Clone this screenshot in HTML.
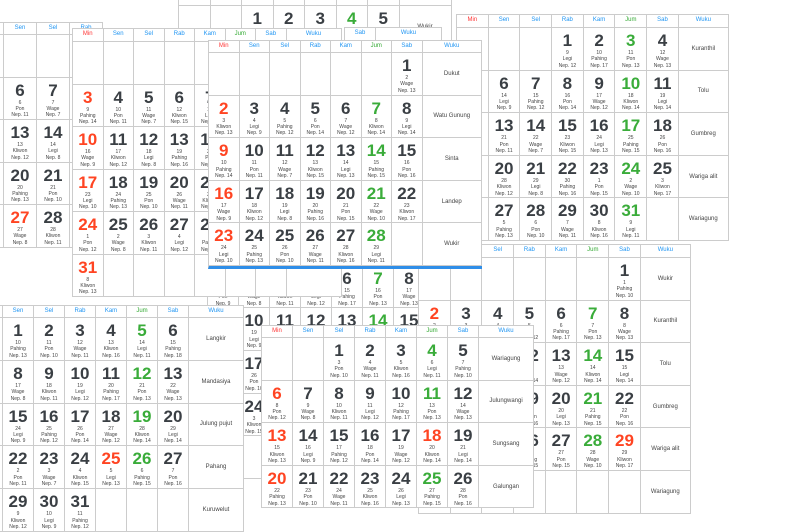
<!DOCTYPE html>
<html><head><meta charset="utf-8"><style>
*{box-sizing:border-box;margin:0;padding:0}
body{width:800px;height:500px;overflow:hidden;background:#fff;position:relative;font-family:"Liberation Sans",sans-serif}
.t{position:absolute;background:#fff;border-top:1px solid #ccc;border-left:1px solid #ccc;display:grid}
.t>p{border-right:1px solid #ccc;border-bottom:1px solid #ccc;text-align:center;overflow:hidden;color:#333}
.t>p.h{font-size:6px;line-height:11px;color:#2196f3}
.t>p.h.r{color:#f33}.t>p.h.g{color:#3a3}
.t>p b{display:block;font-weight:bold;font-size:17px;line-height:18px;margin-top:4px;color:#3a3f44}
.t>p.r b{color:#f42}.t>p.g b{color:#3aac3a}
.t>p i{display:block;font-style:normal;font-size:5px;line-height:6.4px;color:#444}
.t>p.w{display:flex;align-items:center;justify-content:center;font-size:6px;color:#444}
</style></head><body>

<!-- C top -->
<div class="t" style="left:178px;top:-8px;grid-template-columns:repeat(7,31.5px) 52px;grid-template-rows:13px 42px 42px">
<p class="h r">Min</p><p class="h">Sen</p><p class="h">Sel</p><p class="h">Rab</p><p class="h">Kam</p><p class="h g">Jum</p><p class="h">Sab</p><p class="h">Wuku</p>
<p></p><p></p><p><b>1</b><i>2</i><i>Pon</i><i>Nep. 10</i></p><p><b>2</b><i>3</i><i>Wage</i><i>Nep. 11</i></p><p><b>3</b><i>4</i><i>Kliwon</i><i>Nep. 16</i></p><p class="g"><b>4</b><i>5</i><i>Legi</i><i>Nep. 11</i></p><p><b>5</b><i>6</i><i>Pahing</i><i>Nep. 10</i></p><p class="w">Wukir</p>
<p></p><p></p><p></p><p></p><p></p><p></p><p></p><p></p>
</div>

<!-- A left top -->
<div class="t" style="left:-30px;top:22px;grid-template-columns:repeat(4,33px);grid-template-rows:12px repeat(5,42.5px)">
<p class="h r">Min</p><p class="h">Sen</p><p class="h">Sel</p><p class="h">Rab</p>
<p></p><p></p><p></p><p></p>
<p></p><p><b>6</b><i>6</i><i>Pon</i><i>Nep. 11</i></p><p><b>7</b><i>7</i><i>Wage</i><i>Nep. 7</i></p><p></p>
<p></p><p><b>13</b><i>13</i><i>Kliwon</i><i>Nep. 12</i></p><p><b>14</b><i>14</i><i>Legi</i><i>Nep. 8</i></p><p></p>
<p></p><p><b>20</b><i>20</i><i>Pahing</i><i>Nep. 13</i></p><p><b>21</b><i>21</i><i>Pon</i><i>Nep. 10</i></p><p></p>
<p></p><p class="r"><b>27</b><i>27</i><i>Wage</i><i>Nep. 8</i></p><p><b>28</b><i>28</i><i>Kliwon</i><i>Nep. 11</i></p><p></p>
</div>

<!-- J header strip -->
<div class="t" style="left:344px;top:27px;grid-template-columns:31px 66px;grid-template-rows:13px 30px">
<p class="h">Sab</p><p class="h">Wuku</p><p></p><p></p>
</div>

<!-- I behind -->
<div class="t" style="left:207px;top:222px;grid-template-columns:repeat(7,31px) 55px;grid-template-rows:repeat(6,42.7px)">
<p></p><p></p><p></p><p></p><p></p><p></p><p></p><p></p>
<p class="r"><b>2</b><i>11</i><i>Pon</i><i>Nep. 9</i></p><p><b>3</b><i>12</i><i>Wage</i><i>Nep. 8</i></p><p><b>4</b><i>13</i><i>Kliwon</i><i>Nep. 11</i></p><p><b>5</b><i>14</i><i>Legi</i><i>Nep. 12</i></p><p><b>6</b><i>15</i><i>Pahing</i><i>Nep. 17</i></p><p class="g"><b>7</b><i>16</i><i>Pon</i><i>Nep. 13</i></p><p><b>8</b><i>17</i><i>Wage</i><i>Nep. 13</i></p><p class="w">Kuranthil</p>
<p class="r"><b>9</b><i>18</i><i>Kliwon</i><i>Nep. 9</i></p><p><b>10</b><i>19</i><i>Legi</i><i>Nep. 9</i></p><p><b>11</b><i>20</i><i>Pahing</i><i>Nep. 12</i></p><p><b>12</b><i>21</i><i>Pon</i><i>Nep. 14</i></p><p><b>13</b><i>22</i><i>Wage</i><i>Nep. 12</i></p><p class="g"><b>14</b><i>23</i><i>Kliwon</i><i>Nep. 14</i></p><p><b>15</b><i>24</i><i>Legi</i><i>Nep. 14</i></p><p class="w">Tolu</p>
<p class="r"><b>16</b><i>25</i><i>Pahing</i><i>Nep. 13</i></p><p><b>17</b><i>26</i><i>Pon</i><i>Nep. 10</i></p><p><b>18</b><i>27</i><i>Wage</i><i>Nep. 11</i></p><p><b>19</b><i>28</i><i>Kliwon</i><i>Nep. 16</i></p><p><b>20</b><i>29</i><i>Legi</i><i>Nep. 13</i></p><p class="g"><b>21</b><i>1</i><i>Pahing</i><i>Nep. 15</i></p><p><b>22</b><i>2</i><i>Pon</i><i>Nep. 16</i></p><p class="w">Gumbreg</p>
<p class="r"><b>23</b><i>2</i><i>Wage</i><i>Nep. 11</i></p><p><b>24</b><i>3</i><i>Kliwon</i><i>Nep. 15</i></p><p><b>25</b><i>4</i><i>Legi</i><i>Nep. 12</i></p><p><b>26</b><i>5</i><i>Pahing</i><i>Nep. 15</i></p><p><b>27</b><i>6</i><i>Pon</i><i>Nep. 15</i></p><p class="g"><b>28</b><i>7</i><i>Wage</i><i>Nep. 10</i></p><p><b>29</b><i>8</i><i>Kliwon</i><i>Nep. 17</i></p><p class="w">Wariga alit</p>
<p></p><p></p><p></p><p></p><p></p><p></p><p></p><p></p>
</div>

<!-- B -->
<div class="t" style="left:72px;top:28px;grid-template-columns:repeat(7,30.5px) 55px;grid-template-rows:13px repeat(6,42.5px)">
<p class="h r">Min</p><p class="h">Sen</p><p class="h">Sel</p><p class="h">Rab</p><p class="h">Kam</p><p class="h g">Jum</p><p class="h">Sab</p><p class="h">Wuku</p>
<p></p><p></p><p></p><p></p><p></p><p></p><p></p><p></p>
<p class="r"><b>3</b><i>9</i><i>Pahing</i><i>Nep. 14</i></p><p><b>4</b><i>10</i><i>Pon</i><i>Nep. 11</i></p><p><b>5</b><i>11</i><i>Wage</i><i>Nep. 7</i></p><p><b>6</b><i>12</i><i>Kliwon</i><i>Nep. 15</i></p><p><b>7</b><i>13</i><i>Legi</i><i>Nep. 13</i></p><p></p><p></p><p class="w">Sinta</p>
<p class="r"><b>10</b><i>16</i><i>Wage</i><i>Nep. 9</i></p><p><b>11</b><i>17</i><i>Kliwon</i><i>Nep. 12</i></p><p><b>12</b><i>18</i><i>Legi</i><i>Nep. 8</i></p><p><b>13</b><i>19</i><i>Pahing</i><i>Nep. 16</i></p><p><b>14</b><i>20</i><i>Pon</i><i>Nep. 15</i></p><p></p><p></p><p class="w">Landep</p>
<p class="r"><b>17</b><i>23</i><i>Legi</i><i>Nep. 10</i></p><p><b>18</b><i>24</i><i>Pahing</i><i>Nep. 13</i></p><p><b>19</b><i>25</i><i>Pon</i><i>Nep. 10</i></p><p><b>20</b><i>26</i><i>Wage</i><i>Nep. 11</i></p><p><b>21</b><i>27</i><i>Kliwon</i><i>Nep. 16</i></p><p></p><p></p><p class="w">Wukir</p>
<p class="r"><b>24</b><i>1</i><i>Pon</i><i>Nep. 12</i></p><p><b>25</b><i>2</i><i>Wage</i><i>Nep. 8</i></p><p><b>26</b><i>3</i><i>Kliwon</i><i>Nep. 11</i></p><p><b>27</b><i>4</i><i>Legi</i><i>Nep. 12</i></p><p><b>28</b><i>5</i><i>Pahing</i><i>Nep. 15</i></p><p></p><p></p><p class="w">Kulantir</p>
<p class="r"><b>31</b><i>8</i><i>Kliwon</i><i>Nep. 13</i></p><p></p><p></p><p></p><p></p><p></p><p></p><p class="w" style="align-items:flex-start;padding-top:5px">Watu Gunung</p>
</div>

<!-- D right top -->
<div class="t" style="left:456px;top:14px;grid-template-columns:repeat(7,31.7px) 50px;grid-template-rows:13px repeat(5,42.6px)">
<p class="h r">Min</p><p class="h">Sen</p><p class="h">Sel</p><p class="h">Rab</p><p class="h">Kam</p><p class="h g">Jum</p><p class="h">Sab</p><p class="h">Wuku</p>
<p></p><p></p><p></p><p><b>1</b><i>9</i><i>Legi</i><i>Nep. 12</i></p><p><b>2</b><i>10</i><i>Pahing</i><i>Nep. 17</i></p><p class="g"><b>3</b><i>11</i><i>Pon</i><i>Nep. 13</i></p><p><b>4</b><i>12</i><i>Wage</i><i>Nep. 13</i></p><p class="w">Kuranthil</p>
<p></p><p><b>6</b><i>14</i><i>Legi</i><i>Nep. 9</i></p><p><b>7</b><i>15</i><i>Pahing</i><i>Nep. 12</i></p><p><b>8</b><i>16</i><i>Pon</i><i>Nep. 14</i></p><p><b>9</b><i>17</i><i>Wage</i><i>Nep. 12</i></p><p class="g"><b>10</b><i>18</i><i>Kliwon</i><i>Nep. 14</i></p><p><b>11</b><i>19</i><i>Legi</i><i>Nep. 14</i></p><p class="w">Tolu</p>
<p></p><p><b>13</b><i>21</i><i>Pon</i><i>Nep. 11</i></p><p><b>14</b><i>22</i><i>Wage</i><i>Nep. 7</i></p><p><b>15</b><i>23</i><i>Kliwon</i><i>Nep. 15</i></p><p><b>16</b><i>24</i><i>Legi</i><i>Nep. 13</i></p><p class="g"><b>17</b><i>25</i><i>Pahing</i><i>Nep. 15</i></p><p><b>18</b><i>26</i><i>Pon</i><i>Nep. 16</i></p><p class="w">Gumbreg</p>
<p></p><p><b>20</b><i>28</i><i>Kliwon</i><i>Nep. 12</i></p><p><b>21</b><i>29</i><i>Legi</i><i>Nep. 8</i></p><p><b>22</b><i>30</i><i>Pahing</i><i>Nep. 16</i></p><p><b>23</b><i>1</i><i>Pon</i><i>Nep. 15</i></p><p class="g"><b>24</b><i>2</i><i>Wage</i><i>Nep. 10</i></p><p><b>25</b><i>3</i><i>Kliwon</i><i>Nep. 17</i></p><p class="w">Wariga alit</p>
<p></p><p><b>27</b><i>5</i><i>Pahing</i><i>Nep. 13</i></p><p><b>28</b><i>6</i><i>Pon</i><i>Nep. 10</i></p><p><b>29</b><i>7</i><i>Wage</i><i>Nep. 11</i></p><p><b>30</b><i>8</i><i>Kliwon</i><i>Nep. 16</i></p><p class="g"><b>31</b><i>9</i><i>Legi</i><i>Nep. 11</i></p><p></p><p class="w">Wariagung</p>
</div>

<!-- F right lower -->
<div class="t" style="left:418px;top:244px;grid-template-columns:repeat(7,31.7px) 50px;grid-template-rows:13px repeat(6,42.6px)">
<p class="h r">Min</p><p class="h">Sen</p><p class="h">Sel</p><p class="h">Rab</p><p class="h">Kam</p><p class="h g">Jum</p><p class="h">Sab</p><p class="h">Wuku</p>
<p></p><p></p><p></p><p></p><p></p><p></p><p><b>1</b><i>1</i><i>Pahing</i><i>Nep. 10</i></p><p class="w">Wukir</p>
<p class="r"><b>2</b><i>2</i><i>Pon</i><i>Nep. 12</i></p><p><b>3</b><i>3</i><i>Wage</i><i>Nep. 8</i></p><p><b>4</b><i>4</i><i>Kliwon</i><i>Nep. 11</i></p><p><b>5</b><i>5</i><i>Legi</i><i>Nep. 12</i></p><p><b>6</b><i>6</i><i>Pahing</i><i>Nep. 17</i></p><p class="g"><b>7</b><i>7</i><i>Pon</i><i>Nep. 13</i></p><p><b>8</b><i>8</i><i>Wage</i><i>Nep. 13</i></p><p class="w">Kuranthil</p>
<p class="r"><b>9</b><i>9</i><i>Kliwon</i><i>Nep. 13</i></p><p><b>10</b><i>10</i><i>Legi</i><i>Nep. 9</i></p><p><b>11</b><i>11</i><i>Pahing</i><i>Nep. 12</i></p><p><b>12</b><i>12</i><i>Pon</i><i>Nep. 14</i></p><p><b>13</b><i>13</i><i>Wage</i><i>Nep. 12</i></p><p class="g"><b>14</b><i>14</i><i>Kliwon</i><i>Nep. 14</i></p><p><b>15</b><i>15</i><i>Legi</i><i>Nep. 14</i></p><p class="w">Tolu</p>
<p class="r"><b>16</b><i>16</i><i>Pahing</i><i>Nep. 13</i></p><p><b>17</b><i>17</i><i>Pon</i><i>Nep. 10</i></p><p><b>18</b><i>18</i><i>Wage</i><i>Nep. 11</i></p><p><b>19</b><i>19</i><i>Kliwon</i><i>Nep. 16</i></p><p><b>20</b><i>20</i><i>Legi</i><i>Nep. 13</i></p><p class="g"><b>21</b><i>21</i><i>Pahing</i><i>Nep. 15</i></p><p><b>22</b><i>22</i><i>Pon</i><i>Nep. 16</i></p><p class="w">Gumbreg</p>
<p class="r"><b>23</b><i>23</i><i>Wage</i><i>Nep. 11</i></p><p><b>24</b><i>24</i><i>Kliwon</i><i>Nep. 15</i></p><p><b>25</b><i>25</i><i>Legi</i><i>Nep. 12</i></p><p><b>26</b><i>26</i><i>Pahing</i><i>Nep. 15</i></p><p><b>27</b><i>27</i><i>Pon</i><i>Nep. 15</i></p><p class="g"><b>28</b><i>28</i><i>Wage</i><i>Nep. 10</i></p><p class="r"><b>29</b><i>29</i><i>Kliwon</i><i>Nep. 17</i></p><p class="w">Wariga alit</p>
<p></p><p></p><p></p><p></p><p></p><p></p><p></p><p class="w">Wariagung</p>
</div>

<!-- E main -->
<div class="t" style="left:208px;top:40px;grid-template-columns:repeat(7,30.5px) 59.5px;grid-template-rows:12px repeat(5,42.6px);border-bottom:3px solid #2f8ee8">
<p class="h r">Min</p><p class="h">Sen</p><p class="h">Sel</p><p class="h">Rab</p><p class="h">Kam</p><p class="h g">Jum</p><p class="h">Sab</p><p class="h">Wuku</p>
<p></p><p></p><p></p><p></p><p></p><p></p><p><b>1</b><i>2</i><i>Wage</i><i>Nep. 13</i></p><p class="w">Dukut</p>
<p class="r"><b>2</b><i>3</i><i>Kliwon</i><i>Nep. 13</i></p><p><b>3</b><i>4</i><i>Legi</i><i>Nep. 9</i></p><p><b>4</b><i>5</i><i>Pahing</i><i>Nep. 12</i></p><p><b>5</b><i>6</i><i>Pon</i><i>Nep. 14</i></p><p><b>6</b><i>7</i><i>Wage</i><i>Nep. 12</i></p><p class="g"><b>7</b><i>8</i><i>Kliwon</i><i>Nep. 14</i></p><p><b>8</b><i>9</i><i>Legi</i><i>Nep. 14</i></p><p class="w">Watu Gunung</p>
<p class="r"><b>9</b><i>10</i><i>Pahing</i><i>Nep. 14</i></p><p><b>10</b><i>11</i><i>Pon</i><i>Nep. 11</i></p><p><b>11</b><i>12</i><i>Wage</i><i>Nep. 7</i></p><p><b>12</b><i>13</i><i>Kliwon</i><i>Nep. 15</i></p><p><b>13</b><i>14</i><i>Legi</i><i>Nep. 13</i></p><p class="g"><b>14</b><i>15</i><i>Pahing</i><i>Nep. 15</i></p><p><b>15</b><i>16</i><i>Pon</i><i>Nep. 16</i></p><p class="w">Sinta</p>
<p class="r"><b>16</b><i>17</i><i>Wage</i><i>Nep. 9</i></p><p><b>17</b><i>18</i><i>Kliwon</i><i>Nep. 12</i></p><p><b>18</b><i>19</i><i>Legi</i><i>Nep. 8</i></p><p><b>19</b><i>20</i><i>Pahing</i><i>Nep. 16</i></p><p><b>20</b><i>21</i><i>Pon</i><i>Nep. 15</i></p><p class="g"><b>21</b><i>22</i><i>Wage</i><i>Nep. 10</i></p><p><b>22</b><i>23</i><i>Kliwon</i><i>Nep. 17</i></p><p class="w">Landep</p>
<p class="r"><b>23</b><i>24</i><i>Legi</i><i>Nep. 10</i></p><p><b>24</b><i>25</i><i>Pahing</i><i>Nep. 13</i></p><p><b>25</b><i>26</i><i>Pon</i><i>Nep. 10</i></p><p><b>26</b><i>27</i><i>Wage</i><i>Nep. 11</i></p><p><b>27</b><i>28</i><i>Kliwon</i><i>Nep. 16</i></p><p class="g"><b>28</b><i>29</i><i>Legi</i><i>Nep. 11</i></p><p></p><p class="w">Wukir</p>
</div>

<!-- G bottom left -->
<div class="t" style="left:-29px;top:305px;grid-template-columns:repeat(7,31px) 55px;grid-template-rows:12px repeat(5,42.8px)">
<p class="h r">Min</p><p class="h">Sen</p><p class="h">Sel</p><p class="h">Rab</p><p class="h">Kam</p><p class="h g">Jum</p><p class="h">Sab</p><p class="h">Wuku</p>
<p></p><p><b>1</b><i>10</i><i>Pahing</i><i>Nep. 13</i></p><p><b>2</b><i>11</i><i>Pon</i><i>Nep. 10</i></p><p><b>3</b><i>12</i><i>Wage</i><i>Nep. 11</i></p><p><b>4</b><i>13</i><i>Kliwon</i><i>Nep. 16</i></p><p class="g"><b>5</b><i>14</i><i>Legi</i><i>Nep. 11</i></p><p><b>6</b><i>15</i><i>Pahing</i><i>Nep. 18</i></p><p class="w">Langkir</p>
<p class="r"><b>7</b><i>16</i><i>Pon</i><i>Nep. 12</i></p><p><b>8</b><i>17</i><i>Wage</i><i>Nep. 8</i></p><p><b>9</b><i>18</i><i>Kliwon</i><i>Nep. 11</i></p><p><b>10</b><i>19</i><i>Legi</i><i>Nep. 12</i></p><p><b>11</b><i>20</i><i>Pahing</i><i>Nep. 17</i></p><p class="g"><b>12</b><i>21</i><i>Pon</i><i>Nep. 13</i></p><p><b>13</b><i>22</i><i>Wage</i><i>Nep. 13</i></p><p class="w">Mandasiya</p>
<p class="r"><b>14</b><i>23</i><i>Kliwon</i><i>Nep. 13</i></p><p><b>15</b><i>24</i><i>Legi</i><i>Nep. 9</i></p><p><b>16</b><i>25</i><i>Pahing</i><i>Nep. 12</i></p><p><b>17</b><i>26</i><i>Pon</i><i>Nep. 14</i></p><p><b>18</b><i>27</i><i>Wage</i><i>Nep. 12</i></p><p class="g"><b>19</b><i>28</i><i>Kliwon</i><i>Nep. 14</i></p><p><b>20</b><i>29</i><i>Legi</i><i>Nep. 14</i></p><p class="w">Julung pujut</p>
<p class="r"><b>21</b><i>1</i><i>Pahing</i><i>Nep. 13</i></p><p><b>22</b><i>2</i><i>Pon</i><i>Nep. 11</i></p><p><b>23</b><i>3</i><i>Wage</i><i>Nep. 7</i></p><p><b>24</b><i>4</i><i>Kliwon</i><i>Nep. 15</i></p><p class="r"><b>25</b><i>5</i><i>Legi</i><i>Nep. 13</i></p><p class="g"><b>26</b><i>6</i><i>Pahing</i><i>Nep. 15</i></p><p><b>27</b><i>7</i><i>Pon</i><i>Nep. 16</i></p><p class="w">Pahang</p>
<p class="r"><b>28</b><i>8</i><i>Wage</i><i>Nep. 12</i></p><p><b>29</b><i>9</i><i>Kliwon</i><i>Nep. 12</i></p><p><b>30</b><i>10</i><i>Legi</i><i>Nep. 9</i></p><p><b>31</b><i>11</i><i>Pahing</i><i>Nep. 12</i></p><p></p><p></p><p></p><p class="w">Kuruwelut</p>
</div>

<!-- H bottom center -->
<div class="t" style="left:261px;top:325px;grid-template-columns:repeat(7,31px) 55px;grid-template-rows:12px repeat(4,42.6px)">
<p class="h r">Min</p><p class="h">Sen</p><p class="h">Sel</p><p class="h">Rab</p><p class="h">Kam</p><p class="h g">Jum</p><p class="h">Sab</p><p class="h">Wuku</p>
<p></p><p></p><p><b>1</b><i>3</i><i>Pon</i><i>Nep. 10</i></p><p><b>2</b><i>4</i><i>Wage</i><i>Nep. 11</i></p><p><b>3</b><i>5</i><i>Kliwon</i><i>Nep. 16</i></p><p class="g"><b>4</b><i>6</i><i>Legi</i><i>Nep. 11</i></p><p><b>5</b><i>7</i><i>Pahing</i><i>Nep. 10</i></p><p class="w">Wariagung</p>
<p class="r"><b>6</b><i>8</i><i>Pon</i><i>Nep. 12</i></p><p><b>7</b><i>9</i><i>Wage</i><i>Nep. 8</i></p><p><b>8</b><i>10</i><i>Kliwon</i><i>Nep. 11</i></p><p><b>9</b><i>11</i><i>Legi</i><i>Nep. 12</i></p><p><b>10</b><i>12</i><i>Pahing</i><i>Nep. 17</i></p><p class="g"><b>11</b><i>13</i><i>Pon</i><i>Nep. 13</i></p><p><b>12</b><i>14</i><i>Wage</i><i>Nep. 13</i></p><p class="w">Julungwangi</p>
<p class="r"><b>13</b><i>15</i><i>Kliwon</i><i>Nep. 13</i></p><p><b>14</b><i>16</i><i>Legi</i><i>Nep. 9</i></p><p><b>15</b><i>17</i><i>Pahing</i><i>Nep. 12</i></p><p><b>16</b><i>18</i><i>Pon</i><i>Nep. 14</i></p><p><b>17</b><i>19</i><i>Wage</i><i>Nep. 12</i></p><p class="r"><b>18</b><i>20</i><i>Kliwon</i><i>Nep. 14</i></p><p><b>19</b><i>21</i><i>Legi</i><i>Nep. 14</i></p><p class="w">Sungsang</p>
<p class="r"><b>20</b><i>22</i><i>Pahing</i><i>Nep. 13</i></p><p><b>21</b><i>23</i><i>Pon</i><i>Nep. 10</i></p><p><b>22</b><i>24</i><i>Wage</i><i>Nep. 11</i></p><p><b>23</b><i>25</i><i>Kliwon</i><i>Nep. 16</i></p><p><b>24</b><i>26</i><i>Legi</i><i>Nep. 13</i></p><p class="g"><b>25</b><i>27</i><i>Pahing</i><i>Nep. 15</i></p><p><b>26</b><i>28</i><i>Pon</i><i>Nep. 16</i></p><p class="w">Galungan</p>
</div>

</body></html>
